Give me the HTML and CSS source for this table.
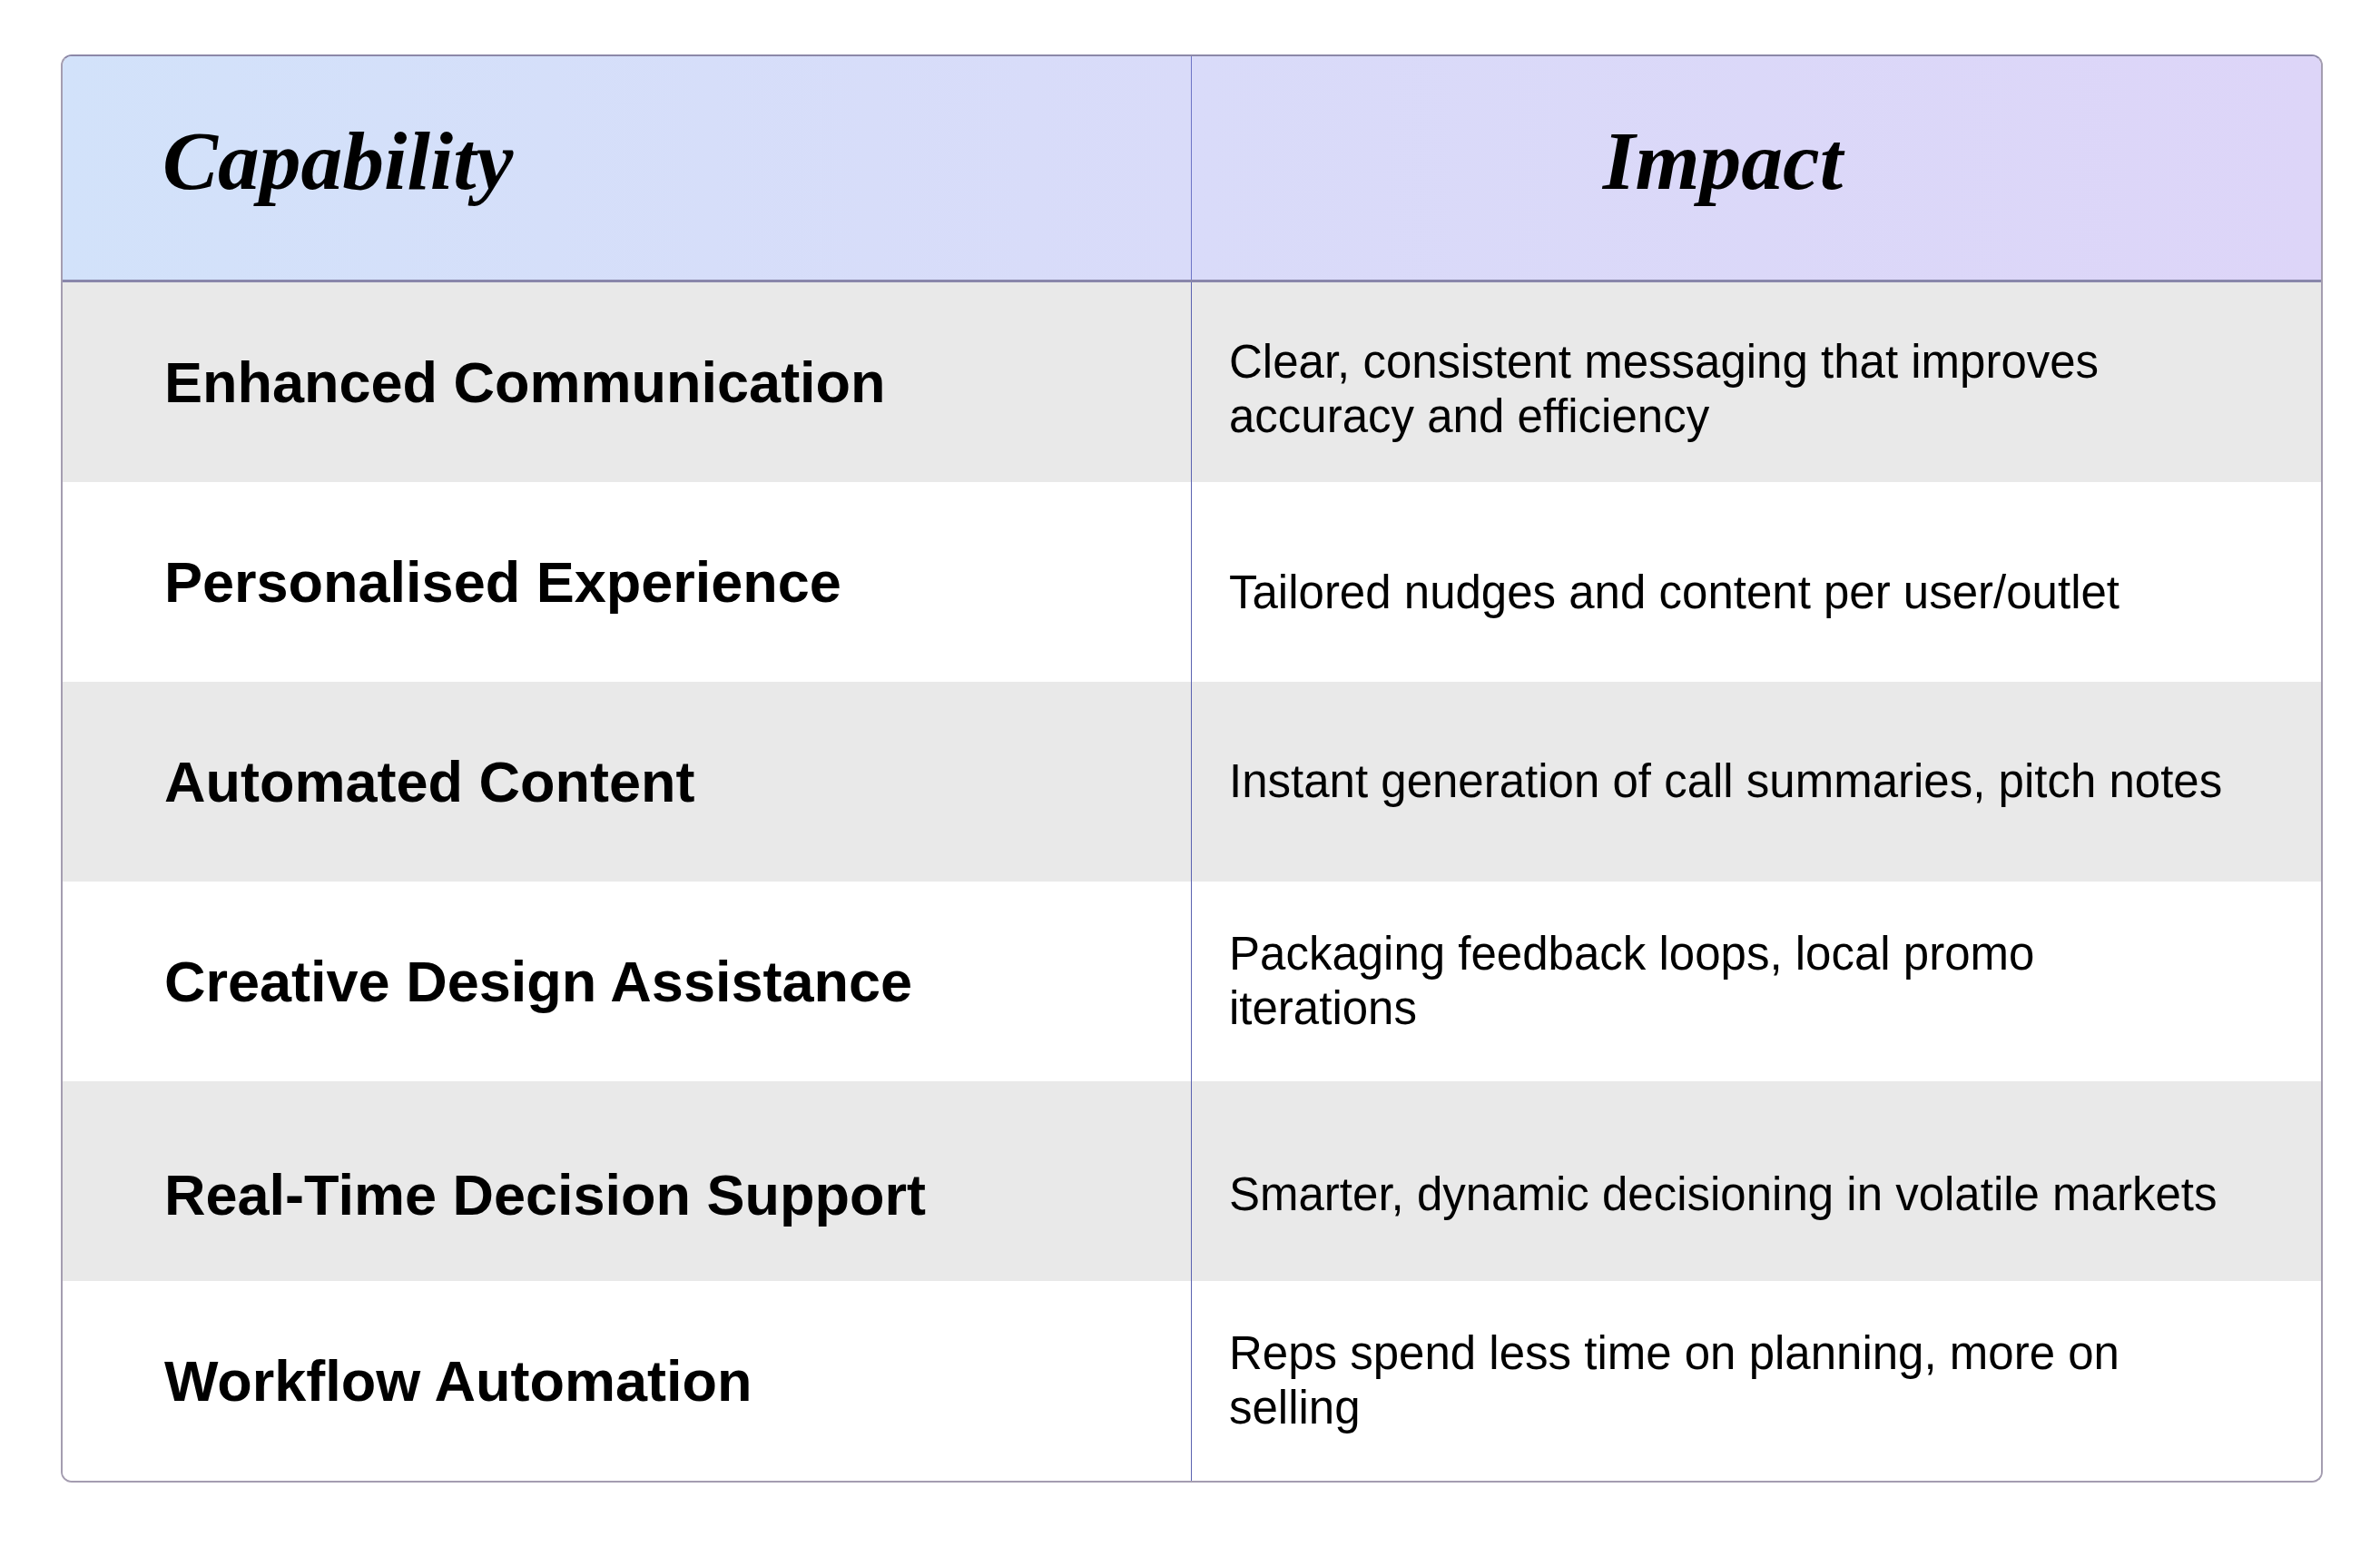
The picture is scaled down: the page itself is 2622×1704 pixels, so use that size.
FILE: index.html
```html
<!DOCTYPE html>
<html lang="en">
<head>
<meta charset="utf-8">
<title>Capability / Impact</title>
<link rel="stylesheet" href="styles.css">
</head>
<body>
<div class="page">
  <div class="table">
    <div class="head">
      <div class="hcell hcell-left">Capability</div>
      <div class="hcell hcell-right">Impact</div>
    </div>
    <div class="row shade">
      <div class="cap">Enhanced Communication</div>
      <div class="imp imp-two">Clear, consistent messaging that improves accuracy and efficiency</div>
    </div>
    <div class="row">
      <div class="cap">Personalised Experience</div>
      <div class="imp imp-one">Tailored nudges and content per user/outlet</div>
    </div>
    <div class="row shade">
      <div class="cap">Automated Content</div>
      <div class="imp">Instant generation of call summaries, pitch notes</div>
    </div>
    <div class="row">
      <div class="cap">Creative Design Assistance</div>
      <div class="imp">Packaging feedback loops, local promo iterations</div>
    </div>
    <div class="row shade low">
      <div class="cap">Real-Time Decision Support</div>
      <div class="imp">Smarter, dynamic decisioning in volatile markets</div>
    </div>
    <div class="row">
      <div class="cap">Workflow Automation</div>
      <div class="imp">Reps spend less time on planning, more on selling</div>
    </div>
  </div>
</div>
</body>
</html>
```

FILE: styles.css
```css
html, body {
  margin: 0;
  padding: 0;
  background: #ffffff;
}

.page {
  padding: 60px 0 0 67px;
}

.table {
  box-sizing: border-box;
  width: 2492px;
  border: 2px solid #a49db0;
  border-top-color: #8c88a8;
  border-radius: 12px;
  overflow: hidden;
  background: #ffffff;
}

.head {
  display: grid;
  grid-template-columns: 1243px 1fr;
  height: 246px;
  border-bottom: 3px solid #8987ab;
  background: linear-gradient(90deg, #d2e2fa 0%, #d9dbf9 50%, #ddd5f8 100%);
}

.hcell {
  display: flex;
  align-items: center;
  padding-bottom: 16px;
  font-family: "Liberation Serif", "Times New Roman", serif;
  font-style: italic;
  font-weight: bold;
  font-size: 91.5px;
  color: #000000;
}

.hcell-left {
  padding-left: 110px;
}

.hcell-right {
  justify-content: center;
  border-left: 1px solid #6d74c6;
  padding-right: 74px;
}

.row {
  display: grid;
  grid-template-columns: 1243px 1fr;
  height: 220px;
  background: #ffffff;
}

.row.shade {
  background: #e9e9e9;
}

.cap {
  display: flex;
  align-items: center;
  padding-left: 112px;
  font-family: "Liberation Sans", Arial, sans-serif;
  font-weight: bold;
  font-size: 63px;
  color: #000000;
}

.imp {
  display: flex;
  align-items: center;
  box-sizing: border-box;
  border-left: 1px solid #5a62b0;
  padding-left: 41px;
  padding-right: 102px;
  font-family: "Liberation Sans", Arial, sans-serif;
  font-size: 51px;
  line-height: 60px;
  color: #000000;
}

.imp-two {
  padding-top: 16px;
}

.imp-one {
  padding-top: 24px;
}

.row.low .cap,
.row.low .imp {
  padding-top: 30px;
}
```
